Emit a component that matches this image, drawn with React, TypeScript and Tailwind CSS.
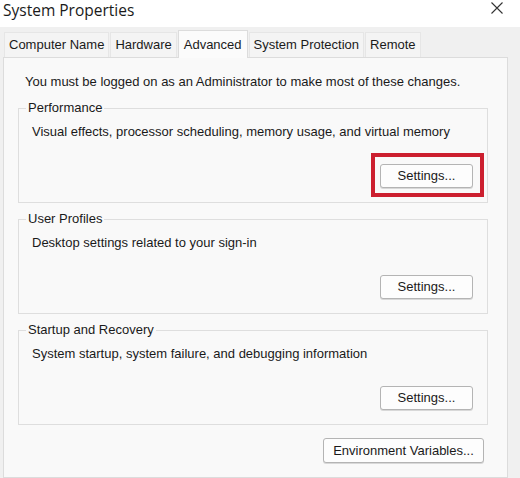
import React from "react";

function Btn({ label, w, h = 24, red = false }: { label: string; w: number; h?: number; red?: boolean }) {
  return (
    <div className="relative" style={{ width: w, height: h }}>
      <div className="w-full h-full flex items-center justify-center border border-[#b4b4b4] rounded-[3px] bg-[#fdfdfd] text-[13px] text-[#1a1a1a] shadow-[0_1px_0_#d8d8d8]">
        {label}
      </div>
      {red && (
        <div className="absolute -left-[9px] -top-[11px] -right-[11px] -bottom-[9px] border-[4px] border-[#cc1f2f]" />
      )}
    </div>
  );
}

function Group({ title, desc, red = false, mt }: { title: string; desc: string; red?: boolean; mt: string }) {
  return (
    <div className={`relative border border-[#dedede] h-[95px] w-[470px] ${mt}`}>
      <span className="absolute -top-[9px] left-[7px] px-[2px] bg-[#f9f9f9] text-[13px] leading-[16px] text-[#1a1a1a]">
        {title}
      </span>
      <div className="pl-[13px] pt-[15px] text-[13px] leading-[16px] text-[#1a1a1a]">{desc}</div>
      <div className="flex justify-end pr-[14px] mt-[24px]">
        <Btn label="Settings..." w={93} red={red} />
      </div>
    </div>
  );
}

export default function App() {
  const tabs = [
    { t: "Computer Name", sel: false },
    { t: "Hardware", sel: false },
    { t: "Advanced", sel: true },
    { t: "System Protection", sel: false },
    { t: "Remote", sel: false },
  ];
  return (
    <div
      className="w-[520px] h-[478px] overflow-hidden bg-[#f0f0f0] flex flex-col text-[#1a1a1a]"
      style={{ fontFamily: '"Liberation Sans", Arial, sans-serif' }}
    >
      <div className="h-[27px] bg-white flex items-start justify-between shrink-0">
        <div className="pl-[3px] text-[15.5px] leading-[21px] text-[#1a1a1a]" style={{ fontFamily: '"Open Sans", "Noto Sans", sans-serif' }}>
          System Properties
        </div>
        <div className="pr-[16px] pt-[1px]">
          <svg width="14" height="14" viewBox="0 0 14 14">
            <path d="M1.5 1.5 L12.5 12.5 M12.5 1.5 L1.5 12.5" stroke="#333" strokeWidth="1.1" />
          </svg>
        </div>
      </div>
      <div className="h-[30px] flex items-end pl-[4px] shrink-0">
        {tabs.map((tb) =>
          tb.sel ? (
            <div
              key={tb.t}
              className="h-[28px] px-[5px] mr-[1px] flex items-center bg-[#fbfbfb] border border-b-0 border-[#dcdcdc] text-[13px] -mb-[1px] relative z-10"
            >
              {tb.t}
            </div>
          ) : (
            <div
              key={tb.t}
              className="h-[25px] px-[4px] mr-[1px] flex items-center bg-[#f4f4f4] border border-b-0 border-[#e6e6e6] text-[13px]"
            >
              {tb.t}
            </div>
          )
        )}
      </div>
      <div className="ml-[3px] w-[505px] flex-1 border border-[#dcdcdc] bg-[#f9f9f9] pl-[14px] pr-[20px]">
        <div className="pt-[16px] pl-[7px] text-[13px] leading-[16px]">
          You must be logged on as an Administrator to make most of these changes.
        </div>
        <Group
          title="Performance"
          desc="Visual effects, processor scheduling, memory usage, and virtual memory"
          red
          mt="mt-[18px]"
        />
        <Group title="User Profiles" desc="Desktop settings related to your sign-in" mt="mt-[16px]" />
        <Group
          title="Startup and Recovery"
          desc="System startup, system failure, and debugging information"
          mt="mt-[16px]"
        />
        <div className="flex justify-end pr-[3px] mt-[13px]">
          <Btn label="Environment Variables..." w={161} h={25} />
        </div>
      </div>
    </div>
  );
}
